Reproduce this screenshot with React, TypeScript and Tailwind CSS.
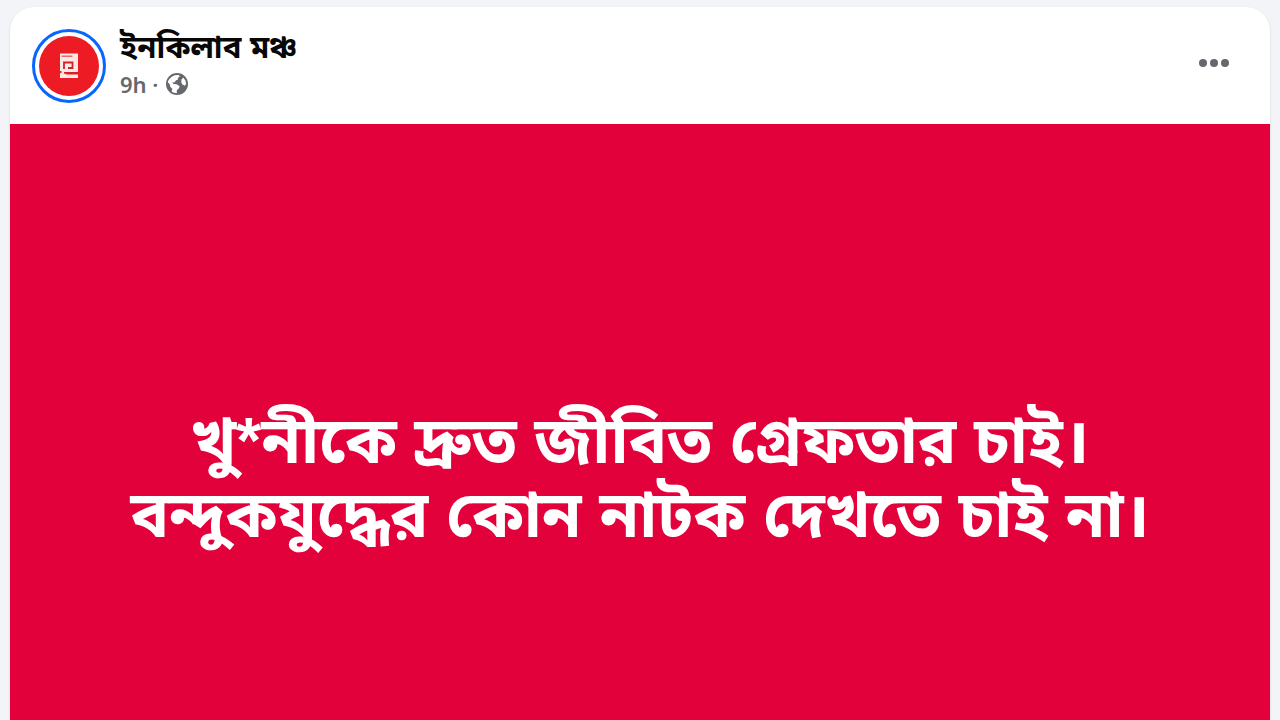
import React from 'react';

const postLines = [
  'খু*নীকে দ্রুত জীবিত গ্রেফতার চাই।',
  'বন্দুকযুদ্ধের কোন নাটক দেখতে চাই না।',
];

/* --- PAGE LOGO --- */
const PageLogo = () => (
  <svg viewBox="0 0 60 60" className="h-full w-full" aria-hidden="true">
    <circle cx="30" cy="30" r="30" fill="#ed1c24" />
    <path fill="#fde9e4" d="M21 17.500h18V37H27v1.500h12V42H21v-5h1.500v-2H21Z" />
    <path fill="#f0646a" d="M22.500 19.500h11v1.500h-11Z" />
    <path fill="none" stroke="#d3202d" strokeWidth="1.800" d="M25 33v-6.500h8.500v5.500h-4.500M25 36.800h14" />
  </svg>
);

/* --- PUBLIC AUDIENCE ICON --- */
const Globe = () => (
  <svg viewBox="0 0 22 22" className="h-[22px] w-[22px]" role="img" aria-label="Public">
    <circle cx="11" cy="11" r="11" fill="#65686c" />
    <path
      fill="#fff"
      d="M6.600 3.200C8.500 2.100 11 1.700 13.200 2.200L13.600 3.700 11.800 5 12 6.600 9.800 7.500 8.700 9.300 6.200 9.600 7.500 11 10.600 11.200 13.600 13.200 13 15.300 10.800 17.200 10.800 20.200 C9 20.100 7.100 19.400 5.700 18.400L6.300 15.800 4.300 13.800 3.600 11 1.700 9.300C2.200 6.900 4.100 4.500 6.600 3.200Z"
    />
    <path fill="#fff" d="M17.200 4.500 19.200 7.200 20.200 10.800 18.800 12.800 16.400 11.500 15.200 9 15.600 6.600Z" />
  </svg>
);

const App = () => (
  <main className="min-h-screen bg-[#f2f4f7] px-[10px] pt-[7px] font-['Liberation_Sans','Noto_Sans_Bengali',sans-serif]">
    <article className="flex h-[calc(100vh-7px)] flex-col overflow-hidden rounded-t-3xl bg-white shadow">
      <header className="flex h-[117px] shrink-0 items-center justify-between pr-[41px] pl-[22px]">
        <div className="flex items-center gap-[14px]">
          <a href="#page" aria-label="ইনকিলাব মঞ্চ" className="h-[74px] w-[74px] rounded-full border-3 border-[#0866ff] p-1">
            <PageLogo />
          </a>
          <div className="pb-1">
            <h2 className="text-[31px] leading-10 font-bold text-[#080809]">
              <a href="#page">ইনকিলাব মঞ্চ</a>
            </h2>
            <p className="flex items-center gap-2 font-['Noto_Sans',sans-serif] text-[22px] leading-8 font-semibold text-[#65686c]">
              <span>9h ·</span>
              <Globe />
            </p>
          </div>
        </div>
        <button type="button" aria-label="More" className="flex gap-[3px] pb-1.5">
          <span className="h-2 w-2 rounded-full bg-[#65686c]" />
          <span className="h-2 w-2 rounded-full bg-[#65686c]" />
          <span className="h-2 w-2 rounded-full bg-[#65686c]" />
        </button>
      </header>

      {/* Coloured status background */}
      <div className="flex grow flex-col items-center bg-[#e2013b] pt-[280px] text-[64px] leading-[74px] font-bold text-white">
        {postLines.map((line) => (
          <p key={line}>{line}</p>
        ))}
      </div>
    </article>
  </main>
);

export default App;
